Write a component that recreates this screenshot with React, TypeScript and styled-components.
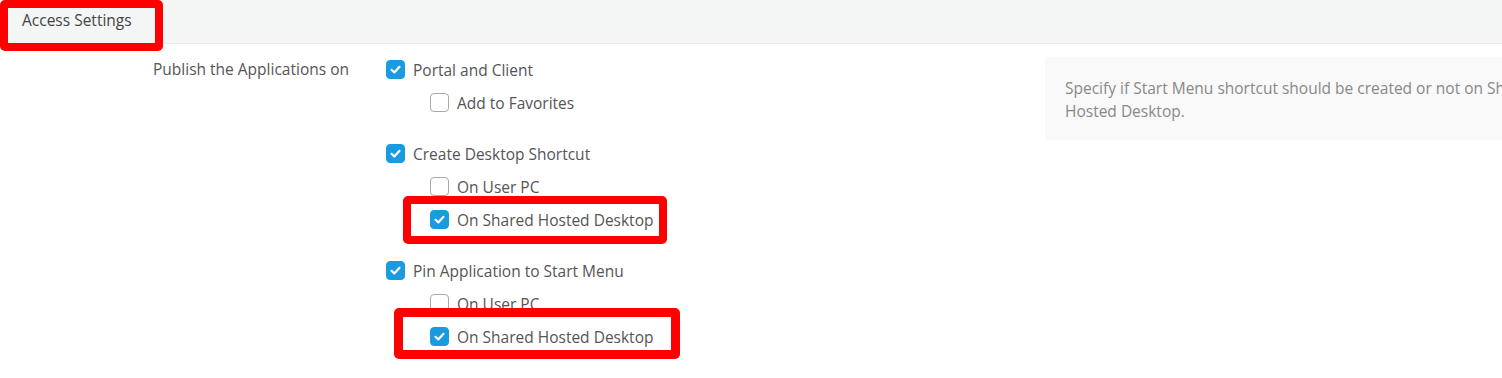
import * as React from 'react';
import styled, {createGlobalStyle} from 'styled-components';

const GlobalStyle = createGlobalStyle`
    html, body {
        margin: 0;
        padding: 0;
        background: #ffffff;
        overflow: hidden;
    }
    body {
        font-family: "Open Sans", "Noto Sans", Arial, sans-serif;
        font-size: 15.5px;
        color: #555555;
    }
`;

interface IAnnotationProps {
    top: number;
    right: number;
    bottom: number;
    left: number;
    thickness: number;
}

interface IOption {
    label: string;
    checked: boolean;
    mark?: IAnnotationProps;
    children?: IOption[];
}

/* tslint:disable:variable-name */
const Page = styled.div`
    width: 1502px;
    height: 378px;
`;

const Header = styled.div`
    height: 43px;
    background: #f4f5f5;
    border-bottom: 1px solid #ebeded;
    display: flex;
    align-items: stretch;
`;

const Tab = styled.div`
    position: relative;
    display: flex;
    align-items: center;
    padding: 0 22px 4px 22px;
    color: #444444;
`;

const Annotation = styled.span<IAnnotationProps>`
    position: absolute;
    top: ${props => props.top}px;
    right: ${props => props.right}px;
    bottom: ${props => props.bottom}px;
    left: ${props => props.left}px;
    border: ${props => props.thickness}px solid #ff0000;
    border-radius: 5px;
    pointer-events: none;
`;

const Body = styled.div`
    display: flex;
    align-items: flex-start;
    padding-left: 153px;
`;

const FieldLabel = styled.div`
    width: 233px;
    flex: none;
    padding-top: 15px;
    line-height: 20px;
    color: #555555;
`;

const Options = styled.div`
    width: 659px;
    flex: none;
    padding-top: 9px;
    display: flex;
    flex-direction: column;
    gap: 18px;
`;

const Group = styled.div`
    display: flex;
    flex-direction: column;
    align-items: flex-start;
`;

const Row = styled.label<{indent: boolean}>`
    position: relative;
    display: inline-flex;
    align-items: center;
    gap: 8px;
    height: 33px;
    margin-left: ${props => (props.indent ? 44 : 0)}px;
    color: #555555;
    cursor: pointer;
`;

const Box = styled.span<{checked: boolean}>`
    width: 19px;
    height: 19px;
    box-sizing: border-box;
    border-radius: 4px;
    flex: none;
    display: flex;
    align-items: center;
    justify-content: center;
    background: ${props => (props.checked ? '#1a9be0' : '#ffffff')};
    border: 1px solid ${props => (props.checked ? '#1a9be0' : '#a9a9a9')};
`;

const Help = styled.div`
    margin-top: 13px;
    width: 520px;
    flex: none;
    height: 83px;
    box-sizing: border-box;
    padding: 20px 20px;
    background: #f9f9f9;
    color: #888888;
    line-height: 23px;
    white-space: nowrap;
`;
/* tslint:enable:variable-name */

const options: IOption[] = [
    {
        label: 'Portal and Client',
        checked: true,
        children: [{label: 'Add to Favorites', checked: false}],
    },
    {
        label: 'Create Desktop Shortcut',
        checked: true,
        children: [
            {label: 'On User PC', checked: false},
            {
                label: 'On Shared Hosted Desktop',
                checked: true,
                mark: {top: -7, right: -14, bottom: -8, left: -27, thickness: 8},
            },
        ],
    },
    {
        label: 'Pin Application to Start Menu',
        checked: true,
        children: [
            {label: 'On User PC', checked: false},
            {
                label: 'On Shared Hosted Desktop',
                checked: true,
                mark: {top: -12, right: -27, bottom: -6, left: -36, thickness: 9},
            },
        ],
    },
];

function CheckBox({checked}: {checked: boolean}): JSX.Element {
    return (
        <Box checked={checked}>
            {checked && (
                <svg width="13" height="13" viewBox="0 0 13 13">
                    <path d="M2.5 6.8 L5.3 9.4 L10.5 3.8" fill="none" stroke="#ffffff" strokeWidth="2.2" strokeLinecap="round" strokeLinejoin="round" />
                </svg>
            )}
        </Box>
    );
}

function OptionRow({option, indent}: {option: IOption; indent: boolean}): JSX.Element {
    return (
        <Row indent={indent}>
            <CheckBox checked={option.checked} />
            <span>{option.label}</span>
            {option.mark && <Annotation {...option.mark} />}
        </Row>
    );
}

export default function App(): JSX.Element {
    return (
        <Page>
            <GlobalStyle />
            <Header>
                <Tab>
                    Access Settings
                    <Annotation top={0} right={-9} bottom={-8} left={0} thickness={8} />
                </Tab>
            </Header>
            <Body>
                <FieldLabel>Publish the Applications on</FieldLabel>
                <Options>
                    {options.map(group => (
                        <Group key={group.label}>
                            <OptionRow option={group} indent={false} />
                            {(group.children || []).map((child, i) => (
                                <OptionRow key={i} option={child} indent />
                            ))}
                        </Group>
                    ))}
                </Options>
                <Help>
                    Specify if Start Menu shortcut should be created or not on Shared
                    <br />
                    Hosted Desktop.
                </Help>
            </Body>
        </Page>
    );
}
